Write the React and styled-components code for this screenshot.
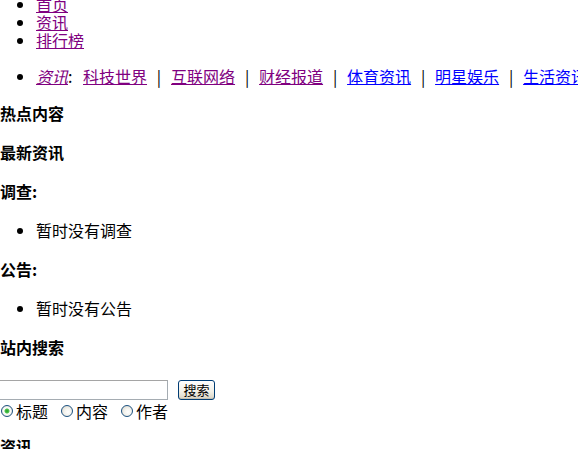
import React from "react";
import styled, { createGlobalStyle } from "styled-components";

const GlobalStyle = createGlobalStyle`
  html, body {
    margin: 0;
    padding: 0;
    background: #ffffff;
    overflow: hidden;
  }
  body {
    font-family: "Noto Sans CJK SC", "Liberation Serif", serif;
    font-size: 16px;
    line-height: 18px;
    color: #000000;
  }
`;

const Page = styled.div`
  margin-top: -5px;
`;

const List = styled.ul`
  margin: ${(p) => p.$margin || "0"};
  padding: 0 0 0 36px;
  list-style: disc;
`;

const Item = styled.li`
  line-height: 18px;
`;

const Line = styled.span`
  white-space: nowrap;
`;

const Link = styled.a`
  color: ${(p) => (p.$visited ? "#800080" : "#0000ff")};
  text-decoration: underline;
  font-style: ${(p) => (p.$italic ? "italic" : "normal")};
  cursor: pointer;
`;

const Colon = styled.span`
  display: inline-block;
  width: 15px;
`;

const Sep = styled.span`
  display: inline-block;
  width: 24px;
  text-align: center;
`;

const Heading = styled.h4`
  margin: ${(p) => p.$top || "21px"} 0 21px;
  font-size: 16px;
  line-height: 18px;
  font-weight: bold;
`;

const Form = styled.form`
  margin: 24px 0 17px -4px;
`;

const SearchRow = styled.div`
  display: flex;
  align-items: center;
  gap: 10px;
  height: 20px;
`;

const TextInput = styled.input`
  box-sizing: border-box;
  width: 172px;
  height: 20px;
  margin: 0;
  border: 1px solid #a5acb2;
  border-top-color: #a5a5a5;
  padding: 1px 3px;
  font-size: 13px;
  background: #fff;
`;

const Button = styled.button`
  box-sizing: border-box;
  height: 20px;
  width: 37px;
  margin: 0;
  padding: 0;
  border: 1px solid #003c74;
  border-radius: 3px;
  background: linear-gradient(#ffffff 0%, #f1efe6 60%, #d8d2c2 100%);
  font-family: "Noto Sans CJK SC", sans-serif;
  font-size: 13px;
  line-height: 16px;
  color: #000;
  box-shadow: inset 0 -1px 0 #c4c0b2;
`;

const RadioRow = styled.div`
  display: flex;
  align-items: center;
  height: 18px;
  margin-top: 2px;
  margin-left: 5px;
`;

const RadioLabel = styled.label`
  display: flex;
  align-items: center;
  margin-right: 13px;
  line-height: 18px;
`;

const Radio = styled.input`
  appearance: none;
  -webkit-appearance: none;
  box-sizing: border-box;
  width: 12px;
  height: 12px;
  margin: 0 3px 0 0;
  border: 1px solid #1c5180;
  border-radius: 50%;
  background: radial-gradient(circle at 60% 60%, #ffffff 0%, #f4f3ee 40%, #d6d3c8 100%);
  &:checked {
    background: radial-gradient(circle at 50% 50%, #21a121 0, #4fc24f 2px, #ffffff 3px, #f4f3ee 60%, #d6d3c8 100%);
  }
`;

const channels = [
  { name: "科技世界", visited: true },
  { name: "互联网络", visited: true },
  { name: "财经报道", visited: true },
  { name: "体育资讯", visited: false },
  { name: "明星娱乐", visited: false },
  { name: "生活资讯", visited: false },
];

export default function App() {
  return (
    <Page>
      <GlobalStyle />
      <List>
        <Item><Link $visited>首页</Link></Item>
        <Item><Link $visited>资讯</Link></Item>
        <Item><Link $visited>排行榜</Link></Item>
      </List>
      <List $margin="18px 0 0">
        <Item>
          <Line>
            <Link $visited $italic>资讯</Link>
            <Colon>:</Colon>
            {channels.map((c, i) => (
              <React.Fragment key={c.name}>
                {i > 0 && <Sep>|</Sep>}
                <Link $visited={c.visited}>{c.name}</Link>
              </React.Fragment>
            ))}
          </Line>
        </Item>
      </List>
      <Heading $top="19px">热点内容</Heading>
      <Heading>最新资讯</Heading>
      <Heading>调查:</Heading>
      <List $margin="16px 0">
        <Item>暂时没有调查</Item>
      </List>
      <Heading>公告:</Heading>
      <List $margin="16px 0">
        <Item>暂时没有公告</Item>
      </List>
      <Heading>站内搜索</Heading>
      <Form onSubmit={(e) => e.preventDefault()}>
        <SearchRow>
          <TextInput type="text" />
          <Button type="submit">搜索</Button>
        </SearchRow>
        <RadioRow>
          <RadioLabel><Radio type="radio" name="k" defaultChecked />标题</RadioLabel>
          <RadioLabel><Radio type="radio" name="k" />内容</RadioLabel>
          <RadioLabel><Radio type="radio" name="k" />作者</RadioLabel>
        </RadioRow>
      </Form>
      <Heading $top="0">资讯</Heading>
    </Page>
  );
}
